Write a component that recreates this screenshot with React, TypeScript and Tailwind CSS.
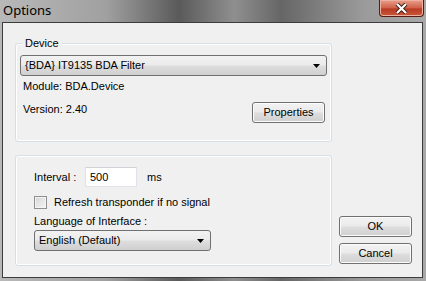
const ui = { fontFamily: '"Liberation Sans", Arial, sans-serif' };

function Arrow() {
  return (
    <svg width="7" height="4" viewBox="0 0 7 4" className="shrink-0">
      <path d="M0 0H7L3.5 4Z" fill="#000" />
    </svg>
  );
}

function Combo({ label, className }: { label: string; className: string }) {
  return (
    <div
      className={`flex h-[21px] items-center justify-between rounded-[3px] border border-[#707070] bg-[linear-gradient(#f2f2f2,#ebebeb_45%,#dddddd_55%,#cfcfcf)] pl-[4px] pr-[6px] text-[11px] text-black ${className}`}
    >
      <span>{label}</span>
      <Arrow />
    </div>
  );
}

function Button({ label }: { label: string }) {
  return (
    <div className="flex h-[21px] w-[73px] items-center justify-center rounded-[3px] border border-[#707070] bg-[linear-gradient(#f2f2f2,#ebebeb_45%,#dddddd_55%,#cfcfcf)] text-[11px] text-black shadow-[inset_0_0_0_1px_#fcfcfc]">
      {label}
    </div>
  );
}

export default function App() {
  return (
    <div
      className="flex h-[281px] w-[426px] flex-col bg-[linear-gradient(90deg,#b8b8b8_0%,#a0a0a0_25%,#5a5a5a_42%,#8f8f8f_55%,#666666_66%,#9a9a9a_85%,#a8a8a8_100%)]"
      style={ui}
    >
      {/* title bar */}
      <div className="relative flex h-[22px] shrink-0 items-center pl-[3px]">
        <span
          className="text-[13px] text-black"
          style={{ fontFamily: '"Noto Sans", "Open Sans", sans-serif' }}
        >
          Options
        </span>
        <div className="absolute right-[2px] top-0 flex h-[17px] w-[45px] items-center justify-center rounded-b-[4px] border border-t-0 border-[#5a1a10] bg-[linear-gradient(#e8a08c,#d06048_50%,#b83a24_55%,#c85838)] shadow-[inset_0_0_0_1px_#eeb0a0]">
          <svg width="13" height="11" viewBox="0 0 13 11">
            <path
              d="M2 1L6.5 5.5L11 1M2 10L6.5 5.5L11 10"
              stroke="#3a1a14"
              strokeWidth="4"
              fill="none"
            />
            <path
              d="M2 1L6.5 5.5L11 1M2 10L6.5 5.5L11 10"
              stroke="#fff"
              strokeWidth="2.2"
              fill="none"
            />
          </svg>
        </div>
      </div>

      {/* client area */}
      <div className="ml-[2px] mr-[3px] flex flex-1 border border-[#3c3c3c] bg-[#f0f0f0]">
        <div className="flex flex-1 pl-[12px] pt-[20px]">
          <div className="flex w-[317px] flex-col gap-[13px]">
            {/* Device group */}
            <div className="relative h-[99px] rounded-[3px] border border-[#d5dfe5] px-[4px] pt-[11px] shadow-[inset_0_0_0_1px_#ffffff]">
              <span className="absolute left-[6px] top-[-7px] bg-[#f0f0f0] px-[3px] text-[11px] leading-[13px] text-black">
                Device
              </span>
              <Combo label="{BDA} IT9135 BDA Filter" className="w-[307px]" />
              <div className="mt-[4px] pl-[3px] text-[11px] leading-[13px] text-black">
                Module: BDA.Device
              </div>
              <div className="mt-[9px] flex items-start justify-between pl-[3px] pr-[2px]">
                <span className="pt-[1px] text-[11px] leading-[13px] text-black">Version: 2.40</span>
                <Button label="Properties" />
              </div>
            </div>

            {/* settings group */}
            <div className="flex h-[111px] flex-col rounded-[3px] border border-[#d5dfe5] pl-[18px] pt-[11px] shadow-[inset_0_0_0_1px_#ffffff]">
              <div className="flex items-center text-[11px] leading-[13px] text-black">
                <span className="w-[51px]">Interval :</span>
                <div className="flex h-[20px] w-[52px] items-center border border-[#e2e3ea] border-t-[#d0d2d8] bg-white pl-[4px]">
                  500
                </div>
                <span className="ml-[10px]">ms</span>
              </div>
              <div className="mt-[9px] flex items-center text-[11px] leading-[13px] text-black">
                <div className="h-[13px] w-[13px] border border-[#8e8f8f] bg-[linear-gradient(135deg,#d4d4d4,#f6f6f6)] shadow-[inset_0_0_0_1px_#f4f4f4]" />
                <span className="ml-[7px]">Refresh transponder if no signal</span>
              </div>
              <div className="mt-[6px] text-[11px] leading-[13px] text-black">
                Language of Interface :
              </div>
              <Combo label="English (Default)" className="mt-[2px] w-[177px]" />
            </div>
          </div>

          <div className="ml-[7px] flex flex-col justify-end gap-[6px] pb-[13px]">
            <Button label="OK" />
            <Button label="Cancel" />
          </div>
        </div>
      </div>
      <div className="h-[3px] shrink-0" />
    </div>
  );
}
